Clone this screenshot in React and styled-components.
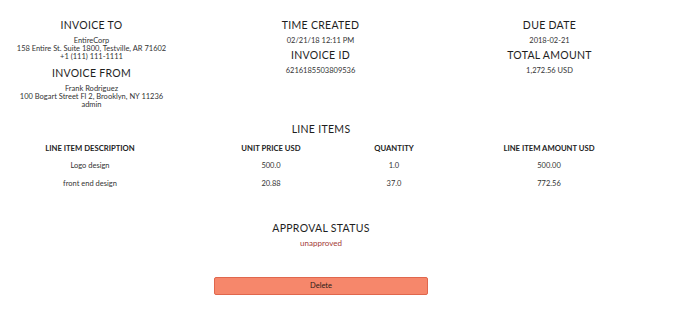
import React from "react";
import styled, { createGlobalStyle } from "styled-components";

const GlobalStyle = createGlobalStyle`
  html, body {
    margin: 0;
    padding: 0;
    background: #fff;
  }
  body {
    font-family: 'Lato', 'Liberation Sans', sans-serif;
    color: #222;
  }
`;

const Page = styled.div`
  width: 642px;
  padding-top: 20px;
`;

const InfoRow = styled.div`
  display: grid;
  grid-template-columns: repeat(3, 229px);
  margin: 0 -23px;
`;

const InfoCol = styled.div`
  display: flex;
  flex-direction: column;
  align-items: center;
  text-align: center;
`;

const Heading = styled.h3`
  margin: 0;
  font-size: 10.5px;
  line-height: 11px;
  font-weight: 400;
  letter-spacing: 0.3px;
  color: #1e1e1e;
`;

const Values = styled.div`
  margin: ${(p) => p.$top ?? 6}px 0 ${(p) => p.$bottom ?? 5}px;
  font-size: 7.5px;
  line-height: 7.8px;
  color: #333;

  > div {
    white-space: nowrap;
  }
`;

const Section = styled.section`
  display: flex;
  flex-direction: column;
  align-items: center;
  margin-top: ${(p) => p.$top}px;
`;

const Table = styled.div`
  display: grid;
  grid-template-columns: 180px 182px 64px 246px;
  align-self: flex-start;
  margin-top: 4px;
  font-size: 7.5px;
  line-height: 18px;
  text-align: center;
  color: #333;
`;

const HeadCell = styled.div`
  font-size: 7.7px;
  font-weight: 700;
  color: #222;
  white-space: nowrap;
`;

const Cell = styled.div`
  white-space: nowrap;
`;

const Status = styled.div`
  margin-top: 4px;
  font-size: 8px;
  line-height: 10px;
  color: #a33a36;
`;

const DeleteButton = styled.button`
  margin-top: 29px;
  width: 214px;
  height: 18px;
  padding: 0;
  border: 1px solid #e0674d;
  border-radius: 2px;
  background: #f6876b;
  color: #2a1a16;
  font-family: 'Lato', 'Liberation Sans', sans-serif;
  font-size: 7.5px;
  cursor: pointer;
`;

const items = [
  { desc: "Logo design", price: "500.0", qty: "1.0", amount: "500.00" },
  { desc: "front end design", price: "20.88", qty: "37.0", amount: "772.56" },
];

export default function App() {
  return (
    <>
      <GlobalStyle />
      <Page>
        <InfoRow>
          <InfoCol>
            <Heading>INVOICE TO</Heading>
            <Values $bottom={8}>
              <div>EntireCorp</div>
              <div>158 Entire St. Suite 1800, Testville, AR 71602</div>
              <div>+1 (111) 111-1111</div>
            </Values>
            <Heading>INVOICE FROM</Heading>
            <Values $top={6}>
              <div>Frank Rodriguez</div>
              <div>100 Bogart Street Fl 2, Brooklyn, NY 11236</div>
              <div>admin</div>
            </Values>
          </InfoCol>
          <InfoCol>
            <Heading>TIME CREATED</Heading>
            <Values $bottom={5}>
              <div>02/21/18 12:11 PM</div>
            </Values>
            <Heading>INVOICE ID</Heading>
            <Values $top={6}>
              <div>6216185503809536</div>
            </Values>
          </InfoCol>
          <InfoCol>
            <Heading>DUE DATE</Heading>
            <Values $bottom={5}>
              <div>2018-02-21</div>
            </Values>
            <Heading>TOTAL AMOUNT</Heading>
            <Values $top={6}>
              <div>1,272.56 USD</div>
            </Values>
          </InfoCol>
        </InfoRow>

        <Section $top={10}>
          <Heading>LINE ITEMS</Heading>
          <Table>
            <HeadCell>LINE ITEM DESCRIPTION</HeadCell>
            <HeadCell>UNIT PRICE USD</HeadCell>
            <HeadCell>QUANTITY</HeadCell>
            <HeadCell>LINE ITEM AMOUNT USD</HeadCell>
            {items.map((it) => (
              <React.Fragment key={it.desc}>
                <Cell>{it.desc}</Cell>
                <Cell>{it.price}</Cell>
                <Cell>{it.qty}</Cell>
                <Cell>{it.amount}</Cell>
              </React.Fragment>
            ))}
          </Table>
        </Section>

        <Section $top={30}>
          <Heading>APPROVAL STATUS</Heading>
          <Status>unapproved</Status>
          <DeleteButton>Delete</DeleteButton>
        </Section>
      </Page>
    </>
  );
}
